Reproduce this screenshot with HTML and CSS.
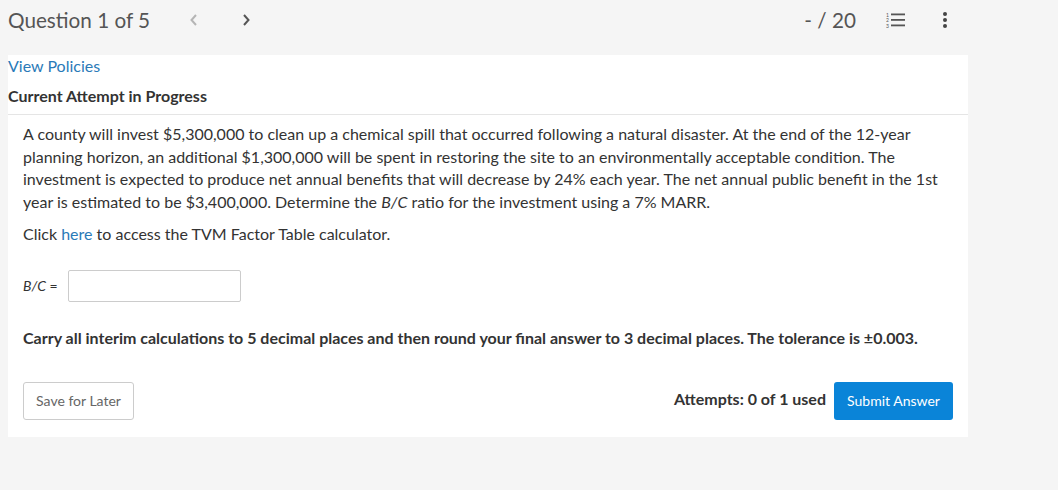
FILE: index.html
```html
<!DOCTYPE html>
<html>
<head>
<meta charset="utf-8">
<link rel="stylesheet" href="styles.css">
</head>
<body>
<header class="topbar">
  <div class="qnav">
    <span class="qtitle">Question 1 of 5</span>
    <span class="chev prev">
      <svg width="10" height="14" viewBox="0 0 10 14"><path d="M7 2 L2.5 7 L7 12" fill="none" stroke="#b5b5b5" stroke-width="2"/></svg>
    </span>
    <span class="chev next">
      <svg width="10" height="14" viewBox="0 0 10 14"><path d="M3 2 L7.5 7 L3 12" fill="none" stroke="#555" stroke-width="2"/></svg>
    </span>
  </div>
  <div class="tools">
    <span class="score">- / 20</span>
    <span class="listicon">
      <svg width="20" height="16" viewBox="0 0 20 16">
        <text x="0" y="4.5" font-size="5" font-family="Lato, sans-serif" fill="#555">1</text>
        <text x="0" y="10" font-size="5" font-family="Lato, sans-serif" fill="#555">2</text>
        <text x="0" y="15.5" font-size="5" font-family="Lato, sans-serif" fill="#555">3</text>
        <rect x="5" y="1.5" width="14" height="1.8" fill="#555"/>
        <rect x="5" y="7" width="14" height="1.8" fill="#555"/>
        <rect x="5" y="12.5" width="14" height="1.8" fill="#555"/>
      </svg>
    </span>
    <span class="dots">
      <svg width="6" height="18" viewBox="0 0 6 18"><circle cx="3" cy="3" r="2" fill="#444"/><circle cx="3" cy="9" r="2" fill="#444"/><circle cx="3" cy="15" r="2" fill="#444"/></svg>
    </span>
  </div>
</header>
<main class="card">
  <div class="cardhead">
    <a class="policies" href="#">View Policies</a>
    <div class="attempt">Current Attempt in Progress</div>
  </div>
  <section class="question">
    <p class="qtext">A county will invest $5,300,000 to clean up a chemical spill that occurred following a natural disaster. At the end of the 12-year planning horizon, an additional $1,300,000 will be spent in restoring the site to an environmentally acceptable condition. The investment is expected to produce net annual benefits that will decrease by 24% each year. The net annual public benefit in the 1st year is estimated to be $3,400,000. Determine the <i>B/C</i> ratio for the investment using a 7% MARR.</p>
    <p class="qtext">Click <a href="#">here</a> to access the TVM Factor Table calculator.</p>
    <div class="answer">
      <span class="label"><i>B/C</i> =</span>
      <span class="input"></span>
    </div>
    <p class="note">Carry all interim calculations to 5 decimal places and then round your final answer to 3 decimal places. The tolerance is ±0.003.</p>
    <div class="actions">
      <button class="save">Save for Later</button>
      <div class="submitwrap">
        <span class="attempts">Attempts: 0 of 1 used</span>
        <button class="submit">Submit Answer</button>
      </div>
    </div>
  </section>
</main>
</body>
</html>
```
FILE: styles.css
```css
html, body {
  margin: 0;
  padding: 0;
  background: #f5f5f5;
  font-family: Lato, "Liberation Sans", sans-serif;
  color: #333;
}
.topbar {
  height: 55px;
  display: flex;
  justify-content: space-between;
  align-items: flex-start;
  padding: 0 0 0 8px;
  width: 1050px;
  box-sizing: border-box;
}
.qnav {
  display: flex;
  align-items: center;
  height: 40px;
}
.qtitle {
  font-size: 20.7px;
  color: #555;
  font-weight: 400;
}
.chev {
  display: flex;
  align-items: center;
}
.chev.prev { margin-left: 39px; }
.chev.next { margin-left: 42px; }
.tools {
  display: flex;
  align-items: center;
  height: 40px;
  margin-right: 102px;
}
.score {
  font-size: 20.7px;
  color: #555;
}
.listicon {
  display: flex;
  margin-left: 30px;
}
.dots {
  display: flex;
  margin-left: 36px;
}
.card {
  margin-left: 8px;
  width: 960px;
  background: #fff;
}
.cardhead {
  border-bottom: 1px solid #e5e5e5;
  padding-bottom: 7px;
}
.policies {
  display: block;
  font-size: 16px;
  line-height: 22px;
  color: #2a7ab8;
  text-decoration: none;
}
.attempt {
  margin-top: 8px;
  font-size: 16px;
  line-height: 22px;
  font-weight: 700;
  color: #333;
}
.question {
  padding: 8px 15px 17px 15px;
}
.qtext {
  margin: 0 0 10px 0;
  font-size: 16px;
  line-height: 22.5px;
  color: #333;
}
.qtext a {
  color: #2a7ab8;
  text-decoration: none;
}
.answer {
  display: flex;
  align-items: center;
  margin-top: 24px;
}
.label {
  font-size: 14px;
  color: #333;
  width: 45px;
}
.input {
  display: block;
  width: 171px;
  height: 30px;
  border: 1px solid #ccc;
  border-radius: 2px;
}
.note {
  margin: 25px 0 0 0;
  font-size: 16px;
  line-height: 22px;
  font-weight: 700;
  color: #333;
}
.actions {
  margin-top: 33px;
  display: flex;
  justify-content: space-between;
  align-items: center;
}
.save {
  height: 38px;
  width: 111px;
  background: #fff;
  border: 1px solid #ccc;
  border-radius: 3px;
  font-family: Lato, "Liberation Sans", sans-serif;
  font-size: 14px;
  color: #666;
  padding: 0;
}
.submitwrap {
  display: flex;
  align-items: center;
}
.attempts {
  font-size: 16px;
  font-weight: 700;
  color: #333;
  margin-right: 8px;
  position: relative;
  top: -2px;
}
.submit {
  height: 38px;
  width: 119px;
  background: #0a84d8;
  border: none;
  border-radius: 3px;
  color: #fff;
  font-family: Lato, "Liberation Sans", sans-serif;
  font-size: 14px;
  padding: 0;
}
```
